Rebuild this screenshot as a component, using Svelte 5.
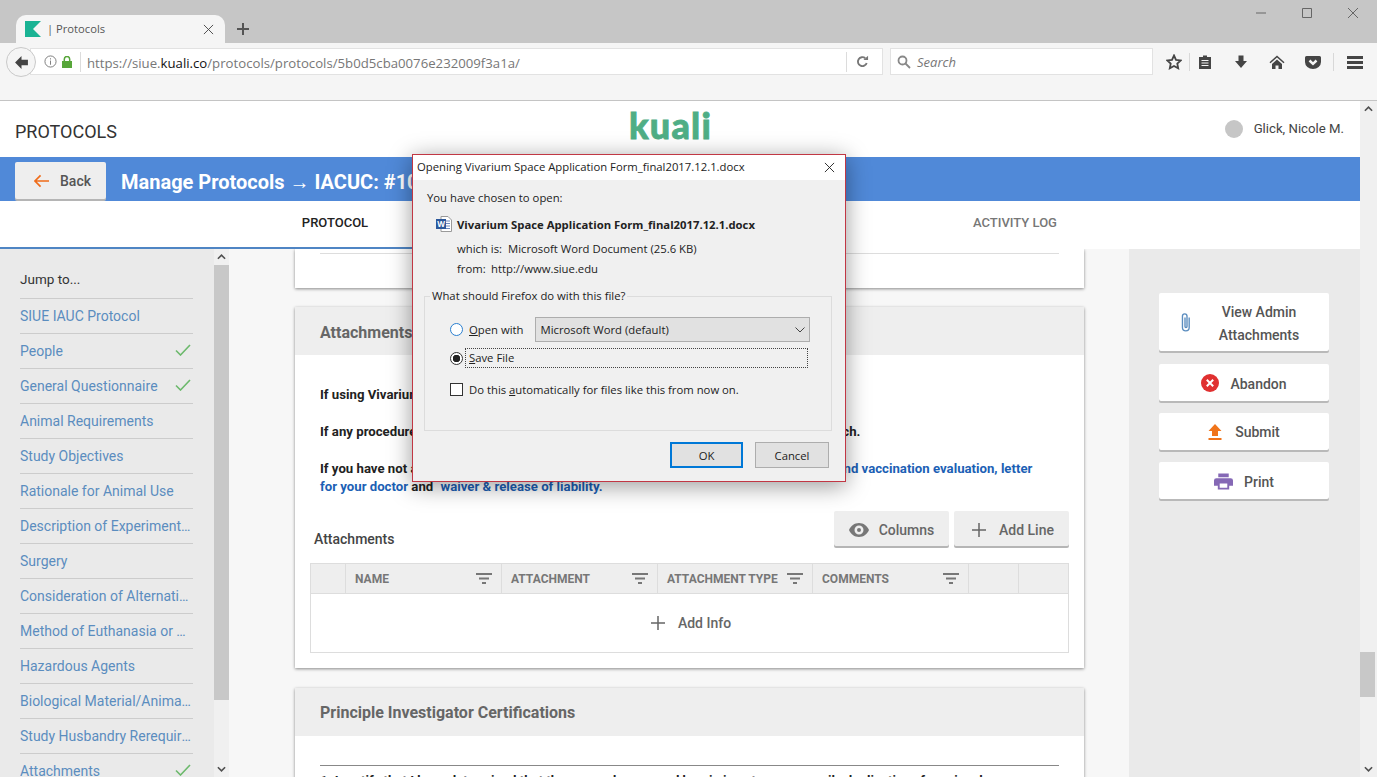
<script>
  const navItems = [
    { label: 'SIUE IAUC Protocol' },
    { label: 'People', done: true },
    { label: 'General Questionnaire', done: true },
    { label: 'Animal Requirements' },
    { label: 'Study Objectives' },
    { label: 'Rationale for Animal Use' },
    { label: 'Description of Experimental Procedures' },
    { label: 'Surgery' },
    { label: 'Consideration of Alternatives to Painful Procedures' },
    { label: 'Method of Euthanasia or Disposition' },
    { label: 'Hazardous Agents' },
    { label: 'Biological Material/Animal Products' },
    { label: 'Study Husbandry Rerequirements' },
    { label: 'Attachments', done: true }
  ];

  const columns = ['Name', 'Attachment', 'Attachment Type', 'Comments'];
</script>

{#snippet chevron(down)}
  <svg class="chev" class:down viewBox="0 0 10 6"><path d="M1 5l4-4 4 4" /></svg>
{/snippet}

{#snippet filter()}
  <svg class="filter" viewBox="0 0 16 11"><path d="M0 0h16v2H0zM3 4.500h10v2H3zM6 9h4v2H6z" /></svg>
{/snippet}

<div class="page">
  <div class="tabbar">
    <div class="tab">
      <svg class="favicon" viewBox="0 0 16 16"><path d="M0 0h16L8 8l8 8H0z" /></svg>
      <span class="tab-title">| Protocols</span>
      <svg class="tab-close" viewBox="0 0 12 12"><path d="M1 1l10 10M11 1L1 11" /></svg>
    </div>
    <svg class="new-tab" viewBox="0 0 12 12"><path d="M6 0v12M0 6h12" /></svg>
    <div class="win-buttons">
      <svg viewBox="0 0 10 10"><path d="M0 5h10" /></svg>
      <svg viewBox="0 0 10 10"><path d="M.5.500h9v9h-9z" /></svg>
      <svg viewBox="0 0 10 10"><path d="M0 0l10 10M10 0L0 10" /></svg>
    </div>
  </div>

  <div class="toolbar">
    <div class="back-circle">
      <svg viewBox="0 0 14 14"><path d="M7 1L1 7l6 6V9.500h6v-5H7z" /></svg>
    </div>
    <div class="urlbar">
      <svg class="info" viewBox="0 0 14 14"><circle cx="7" cy="7" r="6" /><path d="M7 6v4.500M7 3.500v1.300" /></svg>
      <svg class="lock" viewBox="0 0 10 12"><path d="M0 5h10v7H0z" /><path class="shackle" d="M2.300 5V3.200a2.700 2.700 0 0 1 5.400 0V5" /></svg>
      <span class="url-sep"></span>
      <span class="url">https://siue.<b>kuali.co</b>/protocols/protocols/5b0d5cba0076e232009f3a1a/</span>
      <span class="url-sep reload-sep"></span>
      <svg class="reload" viewBox="0 0 14 14"><path d="M11.500 8.500A4.800 4.800 0 1 1 10 3.500" /><path class="fill" d="M8 5.500h5V.8z" /></svg>
    </div>
    <div class="searchbar">
      <svg viewBox="0 0 14 14"><circle cx="5.500" cy="5.500" r="4" /><path d="M8.500 8.500l4.500 4.500" /></svg>
      <span>Search</span>
    </div>
    <div class="tool-icons">
      <svg class="star" viewBox="0 0 16 16"><path d="M8 1.500l2 4.300 4.700.6-3.400 3.200.9 4.700L8 12l-4.200 2.300.9-4.700L1.300 6.400 6 5.800z" /></svg>
      <span class="tool-sep lead"></span>
      <svg viewBox="0 0 16 16"><path d="M2 3h4V1.500h4V3h4v12H2z" /><path class="cut" d="M4.500 6.500h7M4.500 9h7M4.500 11.500h7" /></svg>
      <svg viewBox="0 0 16 16"><path d="M5.500 1.500h5V7H14l-6 7-6-7h3.500z" /></svg>
      <svg viewBox="0 0 16 16"><path d="M8 1.500L.5 8.300l1 1L8 3.600l6.500 5.700 1-1zM3 10l5-4.500 5 4.500v5h-3.500v-3.500h-3V15H3z" /></svg>
      <svg viewBox="0 0 16 16"><path d="M1.500 2h13A1.500 1.500 0 0 1 16 3.500V8a8 7 0 0 1-16 0V3.500A1.500 1.500 0 0 1 1.500 2z" /><path class="cut wide" d="M4.500 6.500L8 9.800l3.500-3.300" /></svg>
      <span class="tool-sep"></span>
      <svg viewBox="0 0 16 16"><path d="M0 2h16v3H0zM0 7h16v3H0zM0 12h16v3H0z" /></svg>
    </div>
  </div>

  <div class="viewport">
    <div class="app">
      <header class="top">
        <span class="product">PROTOCOLS</span>
        <span class="logo">kuali</span>
        <div class="user"><span class="avatar"></span>Glick, Nicole M.</div>
      </header>

      <div class="bluebar">
        <button class="back">
          <svg viewBox="0 0 16 14"><path d="M7 1L1 7l6 6M1 7h15" /></svg>
          Back
        </button>
        <h1>Manage Protocols → IACUC: #10</h1>
      </div>

      <nav class="tabs">
        <span class="active">PROTOCOL</span>
        <span></span>
        <span>ACTIVITY LOG</span>
      </nav>
      <div class="tab-line"></div>

      <div class="body">
        <aside class="side">
          <div class="jump">Jump to...</div>
          {#each navItems as item}
            <div class="nav-item">
              <span class="nav-label">{item.label}</span>
              {#if item.done}
                <svg class="check" viewBox="0 0 16 12"><path d="M1 6.500L5.500 11 15 1" /></svg>
              {/if}
            </div>
          {/each}
        </aside>
        <div class="side-scroll">
          {@render chevron(false)}
          <div class="side-thumb"></div>
          {@render chevron(true)}
        </div>

        <main class="content">
          <section class="card card-top">
            <div class="top-rule"></div>
          </section>

          <section class="card attachments">
            <h2>Attachments</h2>
            <div class="card-text">
              <p>If using Vivarium</p>
              <p class="spread-a">If any procedure<span>ch.</span></p>
              <p class="spread-b">If you have not a<a href="#top">nd vaccination evaluation, letter</a></p>
              <p class="last"><a href="#top">for your doctor</a> and <a class="waiver" href="#top">waiver &amp; release of liability.</a></p>
            </div>

            <div class="table-head">
              <span class="table-title">Attachments</span>
              <button class="grey">
                <svg class="eye" viewBox="0 0 20 14"><path fill-rule="evenodd" d="M10 0c4.500 0 8.300 2.800 10 7-1.700 4.200-5.500 7-10 7S1.700 11.200 0 7c1.700-4.200 5.500-7 10-7zm0 2.500a4.500 4.500 0 1 0 0 9 4.500 4.500 0 0 0 0-9zM10 5a2 2 0 1 1 0 4 2 2 0 0 1 0-4z" /></svg>
                Columns
              </button>
              <button class="grey add-line">
                <svg class="plus" viewBox="0 0 14 14"><path d="M7 0v14M0 7h14" /></svg>
                Add Line
              </button>
            </div>

            <div class="table">
              <div class="thead">
                <div class="th"></div>
                {#each columns as col}
                  <div class="th"><span>{col}</span>{@render filter()}</div>
                {/each}
                <div class="th"></div>
                <div class="th"></div>
              </div>
              <div class="add-info">
                <svg class="plus" viewBox="0 0 14 14"><path d="M7 0v14M0 7h14" /></svg>
                Add Info
              </div>
            </div>
          </section>

          <section class="card certs">
            <h2>Principle Investigator Certifications</h2>
            <div class="certs-body">
              <p>1. I certify that I have determined that the research proposed herein is not unnecessarily duplicative of previously</p>
            </div>
          </section>
        </main>

        <aside class="actions">
          <button class="action tall">
            <svg class="clip" viewBox="0 0 12 22"><path d="M9.500 6v11a3.700 3.700 0 0 1-7.400 0V4.500a2.500 2.500 0 0 1 5 0V16a1.100 1.100 0 0 1-2.200 0V6" /></svg>
            <span>View Admin<br />Attachments</span>
          </button>
          <button class="action abandon">
            <svg viewBox="0 0 18 18"><circle cx="9" cy="9" r="9" /><path d="M5.800 5.800l6.400 6.400M12.200 5.800l-6.400 6.400" /></svg>
            Abandon
          </button>
          <button class="action submit">
            <svg viewBox="0 0 14 16"><path d="M7 0l6.500 7H10v5H4V7H.5zM.5 14h13v2H.5z" /></svg>
            Submit
          </button>
          <button class="action print">
            <svg viewBox="0 0 20 17"><path d="M4.500 0h11v4h-11zM2.500 5h15A2.500 2.500 0 0 1 20 7.500V13h-4v4H4v-4H0V7.500A2.500 2.500 0 0 1 2.500 5zM6 10.500V15h8v-4.500z" /></svg>
            Print
          </button>
        </aside>
      </div>
    </div>

    <div class="page-scroll">
      {@render chevron(false)}
      <div class="page-thumb"></div>
      {@render chevron(true)}
    </div>
  </div>

  <div class="dialog">
    <div class="dlg-title">
      <span>Opening Vivarium Space Application Form_final2017.12.1.docx</span>
      <svg viewBox="0 0 12 12"><path d="M1 1l10 10M11 1L1 11" /></svg>
    </div>
    <div class="dlg-body">
      <p class="chosen">You have chosen to open:</p>
      <div class="file">
        <svg viewBox="0 0 16 16">
          <path class="sheet" d="M5 .5h7l3.500 3.500v11.500H5z" />
          <path class="lines" d="M9 5h5M9 7.500h5M9 10h5M9 12.500h5" />
          <path class="badge" d="M0 3h10v10H0z" />
          <text x="5" y="11" text-anchor="middle">W</text>
        </svg>
        <b>Vivarium Space Application Form_final2017.12.1.docx</b>
      </div>
      <div class="meta"><span class="k1">which is:</span>Microsoft Word Document (25.6 KB)</div>
      <div class="meta"><span class="k2">from:</span>http://www.siue.edu</div>

      <fieldset>
        <legend>What should Firefox do with this file?</legend>
        <div class="row open-row">
          <span class="radio blue"></span>
          <span class="opt"><u>O</u>pen with</span>
          <div class="select">Microsoft Word (default)<svg viewBox="0 0 10 6"><path d="M.5.500L5 5 9.500.5" /></svg></div>
        </div>
        <div class="row save-row">
          <span class="radio on"></span>
          <span class="focus"><u>S</u>ave File</span>
        </div>
        <div class="row auto-row">
          <span class="box"></span>
          <span class="opt">Do this <u>a</u>utomatically for files like this from now on.</span>
        </div>
      </fieldset>

      <div class="dlg-buttons">
        <button class="ok">OK</button>
        <button>Cancel</button>
      </div>
    </div>
  </div>
</div>

<style>
  :global(body) {
    margin: 0;
    background: #fff;
  }

  .page {
    position: relative;
    width: 1377px;
    height: 777px;
    overflow: hidden;
    display: flex;
    flex-direction: column;
    font-family: Roboto, sans-serif;
    font-size: 14px;
    color: #333;
  }

  button {
    font-family: inherit;
    border: 0;
    padding: 0;
  }

  /* browser chrome */
  .tabbar {
    height: 43px;
    flex: none;
    background: #c6c6c6;
    display: flex;
    align-items: flex-end;
    padding-left: 16px;
  }

  .tab {
    width: 209px;
    height: 28px;
    box-sizing: border-box;
    background: #f5f5f5;
    border-radius: 10px 10px 0 0;
    display: flex;
    align-items: center;
    padding: 0 11px 0 9px;
  }

  .favicon {
    width: 16px;
    height: 16px;
    fill: #1ab394;
  }

  .tab-title {
    margin-left: 6px;
    padding-bottom: 1px;
    font: 11.200px "Open Sans", sans-serif;
    color: #555;
    flex: 1;
  }

  .tab-close {
    width: 11px;
    height: 11px;
    stroke: #444;
    stroke-width: 1;
    fill: none;
  }

  .new-tab {
    width: 12px;
    height: 12px;
    margin: 0 0 8px 12px;
    stroke: #555;
    stroke-width: 2;
  }

  .win-buttons {
    margin-left: auto;
    align-self: flex-start;
    display: flex;
    gap: 36px;
    padding: 8px 19px 0 0;
  }

  .win-buttons svg {
    width: 10px;
    height: 10px;
    fill: none;
    stroke: #666;
    stroke-width: 1;
  }

  .toolbar {
    height: 58px;
    flex: none;
    box-sizing: border-box;
    background: #f5f5f5;
    border-bottom: 1px solid #c4c4c4;
    display: flex;
    align-items: flex-start;
    padding: 5px 0 0 6px;
    position: relative;
  }

  .back-circle {
    width: 30px;
    height: 30px;
    box-sizing: border-box;
    margin-top: -1px;
    border: 1px solid #c9c9c9;
    border-radius: 50%;
    background: #f5f5f5;
    display: flex;
    align-items: center;
    justify-content: center;
    position: relative;
    z-index: 1;
    margin-right: -6px;
  }

  .back-circle svg {
    width: 15px;
    height: 15px;
    fill: #444;
  }

  .urlbar {
    width: 853px;
    height: 27px;
    box-sizing: border-box;
    background: #fff;
    border: 1px solid #e2e2e2;
    display: flex;
    align-items: center;
    padding-left: 13px;
  }

  .info {
    width: 13px;
    height: 13px;
    fill: none;
    stroke: #777;
    stroke-width: 1;
  }

  .lock {
    width: 10px;
    height: 12px;
    margin-left: 5px;
    fill: #57a639;
  }

  .shackle {
    fill: none;
    stroke: #57a639;
    stroke-width: 1.500;
  }

  .url-sep {
    width: 1px;
    height: 20px;
    background: #dcdcdc;
    margin: 0 5px 0 8px;
  }

  .url {
    font: 13.200px "Open Sans", sans-serif;
    color: #777;
    flex: none;
    width: 759px;
    padding: 2px 0 0 1px;
  }

  .url b {
    font-weight: 400;
    color: #111;
  }

  .reload-sep {
    margin: 0 9px 0 0;
  }

  .reload {
    width: 13px;
    height: 13px;
    fill: none;
    stroke: #777;
    stroke-width: 2;
  }

  .reload .fill {
    fill: #777;
    stroke: none;
  }

  .searchbar {
    width: 263px;
    height: 27px;
    box-sizing: border-box;
    margin-left: 7px;
    background: #fff;
    border: 1px solid #e2e2e2;
    display: flex;
    align-items: center;
    gap: 6px;
    padding: 1px 0 0 6px;
    font: italic 13px "Open Sans", sans-serif;
    color: #777;
  }

  .searchbar svg {
    width: 14px;
    height: 14px;
    fill: none;
    stroke: #888;
    stroke-width: 1.800;
  }

  .tool-icons {
    position: absolute;
    left: 1166px;
    top: 10px;
    width: 205px;
    display: flex;
    align-items: center;
    height: 18px;
  }

  .tool-icons svg {
    width: 16px;
    height: 16px;
    fill: #454545;
    margin-right: 20px;
    flex: none;
  }

  .tool-icons .star {
    fill: none;
    stroke: #454545;
    stroke-width: 1.800;
    margin-right: 7px;
  }

  .tool-icons .cut {
    fill: none;
    stroke: #f5f5f5;
    stroke-width: 1;
  }

  .tool-icons .wide {
    stroke-width: 2.500;
  }

  .tool-sep {
    width: 1px;
    height: 18px;
    background: #d8d8d8;
    margin: 0 13px 0 -8px;
    flex: none;
  }

  .tool-sep.lead {
    margin: 0 7px 0 0;
  }

  /* app */
  .viewport {
    flex: 1;
    min-height: 0;
    display: flex;
  }

  .app {
    width: 1360px;
    flex: none;
    display: flex;
    flex-direction: column;
    min-height: 0;
    background: #fff;
  }

  .top {
    height: 56px;
    flex: none;
    display: grid;
    grid-template-columns: 1fr auto 1fr;
    align-items: center;
    padding: 0 16px 0 15px;
  }

  .product {
    font-size: 18px;
    color: #333;
    margin-top: 4px;
  }

  .logo {
    font: 900 36px Lato, sans-serif;
    color: #4fae85;
    line-height: 1;
    margin: 0 18px 8px 0;
    letter-spacing: 1.200px;
    -webkit-text-stroke: 0.800px #4fae85;
  }

  .user {
    justify-self: end;
    display: flex;
    align-items: center;
    gap: 11px;
    color: #444;
    font-size: 13.200px;
    margin-bottom: 1px;
  }

  .avatar {
    width: 18px;
    height: 18px;
    border-radius: 50%;
    background: #c6c6c6;
  }

  .bluebar {
    height: 44px;
    flex: none;
    background: #5089d8;
    display: flex;
    align-items: center;
    gap: 15px;
    padding-left: 15px;
  }

  .back {
    width: 91px;
    height: 37px;
    margin-top: 3px;
    background: #eee;
    border-radius: 2px;
    box-shadow: 0 2px 0 #b5b5b5;
    display: flex;
    align-items: center;
    gap: 11px;
    padding-left: 19px;
    box-sizing: border-box;
    font-size: 14px;
    font-weight: 500;
    color: #555;
  }

  .back svg {
    width: 15px;
    height: 14px;
    fill: none;
    stroke: #ef6c1a;
    stroke-width: 1.800;
  }

  h1 {
    margin: 5px 0 0;
    font-size: 20px;
    font-weight: 700;
    color: #fff;
    white-space: nowrap;
  }

  .tabs {
    height: 46px;
    flex: none;
    display: grid;
    grid-template-columns: repeat(3, 340px);
    padding-left: 165px;
    align-items: center;
    justify-items: center;
    font-size: 13px;
    font-weight: 500;
    color: #777;
    padding-bottom: 3px;
    box-sizing: border-box;
  }

  .tabs .active {
    color: #222;
  }

  .tab-line {
    width: 640px;
    height: 2px;
    flex: none;
    background: #4f85c4;
  }

  .body {
    flex: 1;
    min-height: 0;
    display: flex;
    overflow: hidden;
  }

  .side {
    width: 214px;
    flex: none;
    box-sizing: border-box;
    background: #eaeaea;
    padding: 13px 21px 0 20px;
  }

  .jump {
    height: 36px;
    line-height: 35px;
    font-size: 13.500px;
    color: #333;
    border-bottom: 1px solid #ccc;
  }

  .nav-item {
    height: 35px;
    box-sizing: border-box;
    border-bottom: 1px solid #ccc;
    display: flex;
    align-items: center;
    gap: 6px;
    color: #5b8dbf;
  }

  .nav-label {
    flex: 1;
    min-width: 0;
    overflow: hidden;
    white-space: nowrap;
    text-overflow: ellipsis;
  }

  .check {
    width: 16px;
    height: 12px;
    margin: -3px 2px 0 0;
    flex: none;
    fill: none;
    stroke: #6cb96c;
    stroke-width: 1.600;
  }

  .side-scroll,
  .page-scroll {
    flex: none;
    background: #f0f0f0;
    display: flex;
    flex-direction: column;
    align-items: center;
    position: relative;
  }

  .side-scroll {
    width: 15px;
  }

  .chev {
    width: 9px;
    height: 6px;
    flex: none;
    margin: 5px 0;
    fill: none;
    stroke: #505050;
    stroke-width: 1.800;
  }

  .chev.down {
    transform: scaleY(-1);
    margin-top: auto;
  }

  .side-thumb {
    width: 15px;
    height: 435px;
    margin-top: 0;
    background: #c8c8c8;
  }

  .content {
    width: 900px;
    flex: none;
    box-sizing: border-box;
    background: #f7f7f7;
    padding: 0 45px 0 66px;
    overflow: hidden;
  }

  .card {
    background: #fff;
    box-shadow: 0 1px 3px rgba(0, 0, 0, 0.45);
    margin-bottom: 19px;
  }

  .card-top {
    height: 39px;
    padding: 4px 25px 0;
    box-sizing: border-box;
  }

  .top-rule {
    height: 1px;
    background: #ddd;
  }

  h2 {
    margin: 0;
    height: 48px;
    line-height: 52px;
    padding-left: 25px;
    background: #eee;
    font-size: 16px;
    font-weight: 700;
    color: #666;
  }

  .certs h2 {
    line-height: 50px;
  }

  .attachments {
    height: 361px;
    margin-bottom: 20px;
    box-sizing: border-box;
  }

  .card-text {
    padding: 31px 25px 0;
    font-size: 13.200px;
    font-weight: 700;
    color: #222;
    line-height: 18px;
  }

  .card-text p {
    margin: 0 0 19px;
    display: flex;
    white-space: pre;
  }

  .card-text a {
    color: #1c5fb5;
    text-decoration: none;
  }

  .spread-a span {
    margin-left: 426px;
  }

  .card-text .spread-b {
    margin: 0;
  }

  .spread-b a {
    margin-left: 426px;
  }

  .card-text .last {
    margin: 0;
  }

  .waiver {
    margin-left: 4px;
  }

  .table-head {
    margin: 15px 15px 0 19px;
    display: flex;
    align-items: center;
    gap: 5px;
    height: 37px;
  }

  .table-title {
    flex: 1;
    font-weight: 500;
    color: #444;
    font-size: 14px;
    margin-top: 18px;
  }

  .grey {
    height: 35px;
    margin-bottom: 2px;
    padding-top: 2px;
    box-sizing: border-box;
    background: #eee;
    border-radius: 2px;
    box-shadow: 0 2px 0 #b5b5b5;
    display: flex;
    align-items: center;
    justify-content: center;
    font-size: 14px;
    font-weight: 500;
    color: #666;
    gap: 10px;
    width: 115px;
  }

  .add-line {
    gap: 13px;
    padding-left: 3px;
  }

  .eye {
    width: 20px;
    height: 14px;
    fill: #777;
  }

  .plus {
    width: 14px;
    height: 14px;
    stroke: #666;
    stroke-width: 1.500;
  }

  .table {
    margin: 15px 15px 0;
    height: 90px;
    box-sizing: border-box;
    border: 1px solid #ddd;
  }

  .thead {
    height: 29px;
    display: grid;
    grid-template-columns: 35px 156px 156px 155px 156px 50px 1fr;
    background: #eee;
    border-bottom: 1px solid #ddd;
  }

  .th {
    border-right: 1px solid #ddd;
    display: flex;
    align-items: center;
    justify-content: space-between;
    padding: 0 9px;
    font-size: 12px;
    font-weight: 700;
    color: #777;
    text-transform: uppercase;
    white-space: nowrap;
  }

  .th:last-child {
    border-right: 0;
  }

  .filter {
    width: 16px;
    height: 11px;
    flex: none;
    fill: #777;
  }

  .add-info {
    height: 58px;
    display: flex;
    align-items: center;
    justify-content: center;
    gap: 13px;
    font-size: 14px;
    font-weight: 500;
    color: #666;
    padding-left: 3px;
  }

  .certs-body {
    margin: 29px 25px 0;
    border-top: 1px solid #888;
  }

  .certs-body p {
    margin: 7px 0 0;
    font-size: 13.200px;
    font-weight: 700;
    color: #222;
    white-space: nowrap;
  }

  .actions {
    flex: 1;
    background: #eaeaea;
    padding: 44px 31px 0 30px;
    display: flex;
    flex-direction: column;
    align-items: stretch;
  }

  .action {
    height: 37px;
    flex: none;
    box-sizing: border-box;
    padding-top: 1px;
    background: #fff;
    border-radius: 2px;
    box-shadow: 0 2px 0 #b9b9b9;
    margin-bottom: 12px;
    display: flex;
    align-items: center;
    justify-content: center;
    gap: 11px;
    font-size: 14px;
    font-weight: 500;
    color: #555;
  }

  .tall {
    height: 58px;
    line-height: 23px;
    gap: 0;
    justify-content: flex-start;
    padding: 4px 0 0 21px;
    margin-bottom: 13px;
  }

  .tall span {
    flex: 1;
    text-align: center;
    padding-right: 3px;
  }

  .clip {
    width: 12px;
    height: 20px;
    margin-top: -4px;
    fill: none;
    stroke: #5b8dbf;
    stroke-width: 1.500;
  }

  .abandon {
    padding-top: 3px;
  }

  .abandon svg {
    width: 18px;
    height: 18px;
    margin-top: -3px;
    fill: #e03030;
    stroke: #fff;
    stroke-width: 2;
  }

  .abandon circle {
    stroke: none;
  }

  .submit {
    gap: 13px;
  }

  .submit svg {
    width: 14px;
    height: 16px;
    fill: #f0741a;
  }

  .print {
    padding-top: 3px;
  }

  .print svg {
    width: 19px;
    height: 17px;
    margin-top: -2px;
    fill: #8568b5;
  }

  .page-scroll {
    flex: 1;
  }

  .page-thumb {
    position: absolute;
    left: 0;
    top: 551px;
    width: 15px;
    height: 45px;
    background: #c8c8c8;
  }

  /* firefox dialog, floats over the page */
  .dialog {
    position: absolute;
    left: 412px;
    top: 154px;
    width: 434px;
    height: 328px;
    box-sizing: border-box;
    border: 1px solid #c13744;
    background: #f0f0f0;
    box-shadow: 0 4px 22px rgba(0, 0, 0, 0.4);
    font: 11.300px "Open Sans", sans-serif;
    color: #222;
  }

  .dlg-title {
    height: 25px;
    padding: 0 10px 2px 4px;
    box-sizing: border-box;
    background: #fff;
    display: flex;
    align-items: center;
    justify-content: space-between;
  }

  .dlg-title svg {
    width: 11px;
    height: 11px;
    margin-top: 2px;
    fill: none;
    stroke: #222;
    stroke-width: 1;
  }

  .dlg-body {
    padding: 0 14px;
  }

  .chosen {
    margin: 0;
    padding-top: 10px;
    line-height: 16px;
  }

  .file {
    display: flex;
    align-items: center;
    gap: 5px;
    margin: 10px 0 0 9px;
    height: 16px;
  }

  .file svg {
    width: 16px;
    height: 16px;
    flex: none;
  }

  .sheet {
    fill: #fff;
    stroke: #9a9a9a;
  }

  .lines {
    stroke: #6d8ac0;
  }

  .badge {
    fill: #2b579a;
  }

  .file text {
    font: 700 8px "Open Sans", sans-serif;
    fill: #fff;
  }

  .meta {
    margin: 4px 0 0 30px;
    line-height: 16px;
    display: flex;
  }

  .file + .meta {
    margin-top: 9px;
  }

  .k1 {
    width: 51px;
  }

  .k2 {
    width: 34px;
  }

  fieldset {
    margin: 12px 0 0 -3px;
    width: 408px;
    height: 142px;
    box-sizing: border-box;
    padding: 0;
    border: 1px solid #dcdcdc;
    position: relative;
  }

  legend {
    margin-left: 5px;
    padding: 0 2px;
    line-height: 14px;
  }

  .row {
    display: flex;
    align-items: center;
    margin-left: 25px;
    gap: 6px;
  }

  .open-row {
    margin-top: 14px;
    height: 25px;
  }

  .save-row {
    margin-top: 6px;
    height: 20px;
  }

  .auto-row {
    margin-top: 11px;
    height: 20px;
  }

  .radio {
    width: 13px;
    height: 13px;
    box-sizing: border-box;
    border-radius: 50%;
    border: 1px solid #333;
    background: #fff;
    flex: none;
  }

  .radio.blue {
    border-color: #2a7fd0;
  }

  .radio.on {
    background: radial-gradient(circle, #222 0 3.500px, #fff 4px);
  }

  .box {
    width: 13px;
    height: 13px;
    box-sizing: border-box;
    border: 1px solid #333;
    background: #fff;
    flex: none;
  }

  .select {
    width: 275px;
    height: 25px;
    box-sizing: border-box;
    margin-left: 6px;
    background: #e1e1e1;
    border: 1px solid #adadad;
    display: flex;
    align-items: center;
    justify-content: space-between;
    padding: 0 4px 0 4px;
  }

  .select svg {
    width: 10px;
    height: 6px;
    fill: none;
    stroke: #444;
  }

  .focus {
    width: 343px;
    height: 20px;
    box-sizing: border-box;
    border: 1px dotted #444;
    line-height: 18px;
    margin-left: -4px;
    padding-left: 3px;
  }

  .dlg-buttons {
    display: flex;
    justify-content: flex-end;
    gap: 12px;
    margin: 11px 2px 0 0;
  }

  .dlg-buttons button {
    width: 74px;
    height: 26px;
    box-sizing: border-box;
    background: #e1e1e1;
    border: 1px solid #adadad;
    font: inherit;
    color: #222;
  }

  .dlg-buttons .ok {
    width: 73px;
    border: 2px solid #0078d7;
  }
</style>
